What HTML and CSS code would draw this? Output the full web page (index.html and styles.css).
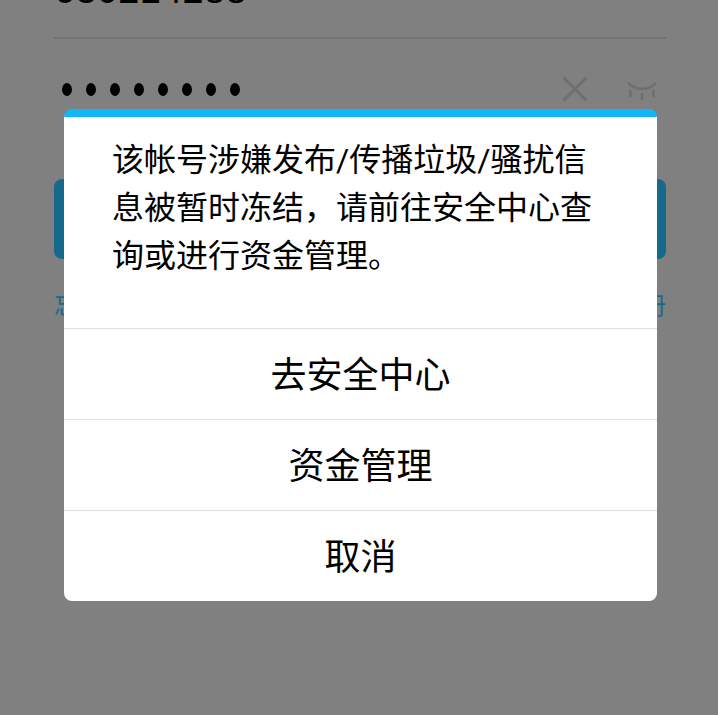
FILE: index.html
```html
<!DOCTYPE html>
<html lang="zh">
<head>
<meta charset="utf-8">
<title>登录</title>
<link rel="stylesheet" href="styles.css">
</head>
<body>
<main class="page">
  <div class="field field-account"><span class="account">630214288</span></div>
  <div class="field field-password">
    <span class="dots"><i></i><i></i><i></i><i></i><i></i><i></i><i></i><i></i></span>
    <svg class="icon-clear" viewBox="0 0 26 26"><path d="M1.5 1.5 24.5 24.5M24.5 1.5 1.5 24.5"/></svg>
    <svg class="icon-eye" viewBox="0 0 32 20"><path d="M2 1.5C8 10 24 10 30 1.5M4.5 9v7M27.5 9v7M16 12v7"/></svg>
  </div>
  <div class="login-btn"></div>
  <div class="links"><span>忘记密码</span><span>新用户注册</span></div>
</main>
<div class="overlay">
  <section class="dialog">
    <p class="message">该帐号涉嫌发布/传播垃圾/骚扰信息被暂时冻结，请前往安全中心查询或进行资金管理。</p>
    <div class="action">去安全中心</div>
    <div class="action">资金管理</div>
    <div class="action">取消</div>
  </section>
</div>
</body>
</html>
```
FILE: styles.css
```css
* { box-sizing: border-box; }
html, body { margin: 0; height: 100%; }
body {
  position: relative;
  height: 715px;
  overflow: hidden;
  background: #808080;
  font-family: "Liberation Sans", "Noto Sans CJK SC", sans-serif;
}
.page { padding: 0 52px 0 54px; margin-top: -43px; }
.field { border-bottom: 2px solid #737373; }
.field-account { height: 82px; }
.account { display: block; height: 67px; font-size: 38px; line-height: 67px; letter-spacing: 0.3px; color: #000; }
.field-password { height: 100px; display: flex; align-items: center; padding-left: 8px; border-bottom: 0; }
.dots { display: flex; gap: 14px; flex: 1; }
.dots i { width: 10px; height: 13px; border-radius: 50%; background: #000; }
.icon-clear { width: 26px; height: 26px; margin-right: 38px; fill: none; stroke: #6f6f6f; stroke-width: 3; }
.icon-eye { width: 32px; height: 20px; margin: 4px 8px 0 0; fill: none; stroke: #6f6f6f; stroke-width: 2.6; }
.login-btn { height: 80px; margin-top: 40px; border-radius: 8px; background: #156a8c; }
.links { display: flex; justify-content: space-between; margin-top: 31px; font-size: 24px; line-height: 32px; color: #156a8c; }
.overlay { position: absolute; left: 64px; top: 109px; width: 593px; }
.dialog { height: 492px; background: #fff; border-top: 8px solid #12b7f5; border-radius: 8px; overflow: hidden; display: flex; flex-direction: column; }
.message { flex: none; margin: 0; height: 211px; padding: 19px 48px 0; font-family: Roboto, "Noto Sans CJK SC", sans-serif; font-size: 32px; line-height: 48px; color: #000; }
.action { flex: none; height: 91px; padding-bottom: 4px; border-top: 1px solid #e0e0e0; display: flex; align-items: center; justify-content: center; font-size: 36px; color: #000; }
```
